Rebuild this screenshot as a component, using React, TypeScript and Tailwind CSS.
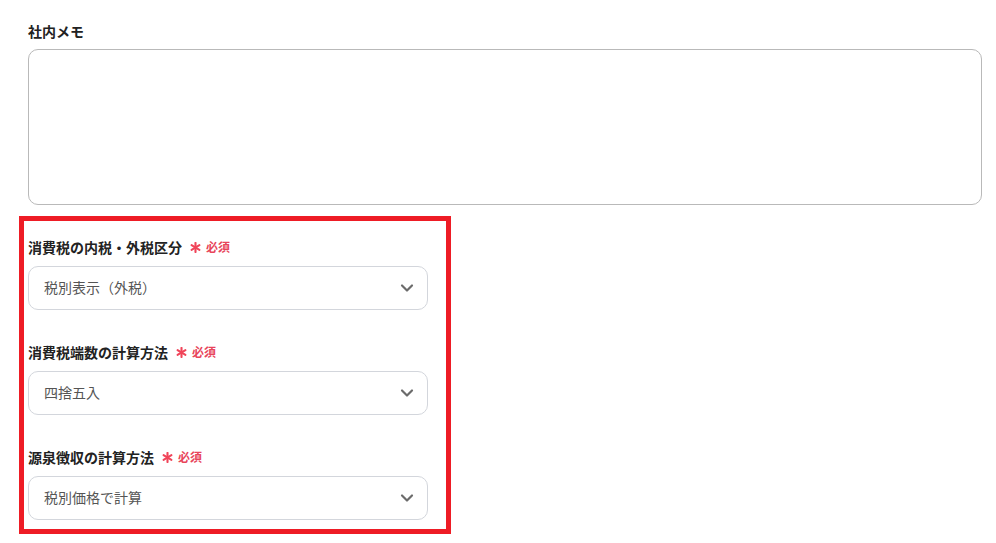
import { ChevronDown } from 'lucide-react'

const font = { fontFamily: '"Noto Sans CJK JP", "Noto Sans", sans-serif' }

function Required() {
  return (
    <span className="ml-[8px] inline-flex items-center gap-[5px]">
      <svg width="11" height="11" viewBox="0 0 12 12" className="text-[#f0455a]">
        <g stroke="currentColor" strokeWidth="2.3" strokeLinecap="round">
          <line x1="6" y1="1" x2="6" y2="11" />
          <line x1="1.7" y1="3.5" x2="10.3" y2="8.5" />
          <line x1="1.7" y1="8.5" x2="10.3" y2="3.5" />
        </g>
      </svg>
      <span className="text-[12px] font-bold text-[#e8455a]">必須</span>
    </span>
  )
}

function SelectField({ label, value }: { label: string; value: string }) {
  return (
    <div>
      <div className="flex items-center h-[20px] text-[14px] font-bold text-[#222]">
        {label}
        <Required />
      </div>
      <button className="mt-[9px] w-[400px] h-[44px] flex items-center justify-between pl-[15px] pr-[10px] border border-[#d3d6dc] rounded-[10px] bg-white text-[14px] text-[#555]">
        <span className="-mt-[2px]">{value}</span>
        <ChevronDown size={20} strokeWidth={2.6} className="text-[#6b6b6b]" />
      </button>
    </div>
  )
}

export default function App() {
  return (
    <div className="w-[996px] h-[543px] bg-white overflow-hidden" style={font}>
      <div className="pl-[19px] pr-[14px] pt-[21px]">
        {/* Memo */}
        <div className="pl-[9px]">
          <div className="h-[20px] flex items-center text-[14px] font-bold text-[#222]">社内メモ</div>
          <textarea className="mt-[8px] block w-[954px] h-[156px] border border-[#b9b9b9] rounded-[10px] resize-none" />
        </div>

        {/* Highlighted tax settings */}
        <div className="mt-[11px] w-[432px] border-[5px] border-[#ee1c25] pl-[4px] pt-[16px] pb-[9px] flex flex-col gap-[32px]">
          <SelectField label="消費税の内税・外税区分" value="税別表示（外税）" />
          <SelectField label="消費税端数の計算方法" value="四捨五入" />
          <SelectField label="源泉徴収の計算方法" value="税別価格で計算" />
        </div>
      </div>
    </div>
  )
}
